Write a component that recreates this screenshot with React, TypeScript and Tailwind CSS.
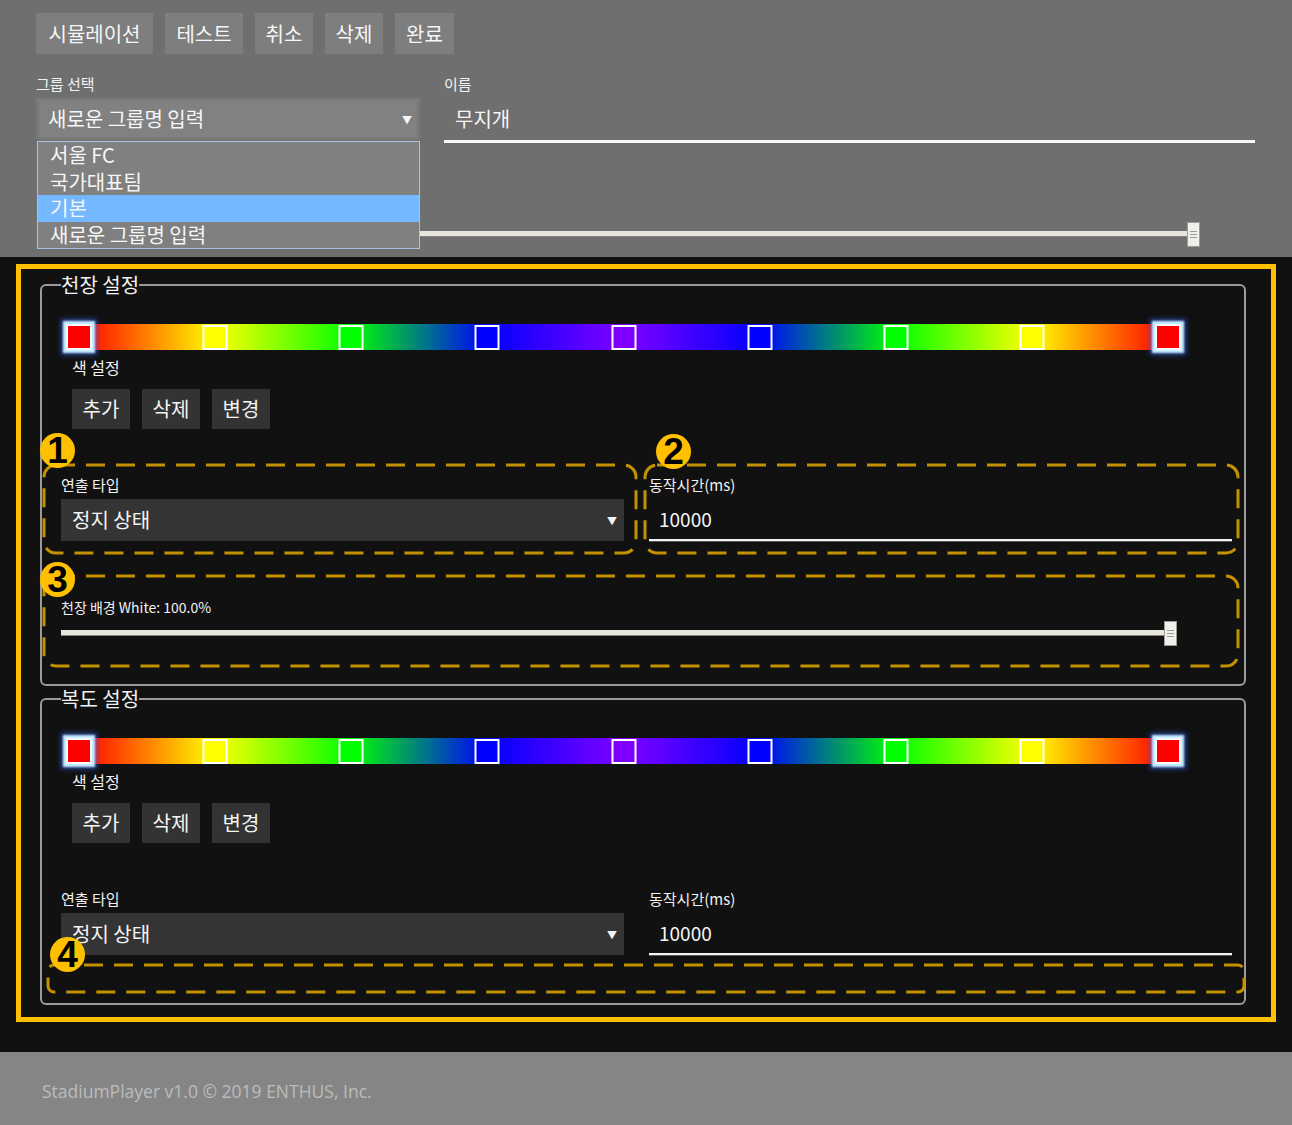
import React from "react";

const RAINBOW = ["#ff0000", "#ffff00", "#00ff00", "#0000ff", "#8000ff", "#0000ff", "#00ff00", "#ffff00", "#ff0000"];

function ColorBar() {
  const pad = 13;
  const span = 1089;
  const stops = RAINBOW.map((c, i) => ({ c, x: pad + (span * i) / (RAINBOW.length - 1) }));
  const background = `linear-gradient(to right, ${stops.map((s) => `${s.c} ${s.x}px`).join(", ")})`;
  return (
    <div className="relative ml-[5px] h-[26px] w-[1115px]" style={{ background }}>
      {stops.map((s, i) => {
        const selected = i === 0 || i === stops.length - 1;
        return (
          <div
            key={i}
            className={
              selected
                ? "absolute top-0 h-[26px] w-[26px] -translate-x-1/2 border-2 border-[#f6fcff] shadow-[0_0_2px_3px_#c8ecff,0_0_5px_5px_rgba(40,90,220,0.65)]"
                : "absolute top-[0.5px] h-[25px] w-[25px] -translate-x-1/2 border-2 border-white"
            }
            style={{ left: s.x, backgroundColor: s.c }}
          />
        );
      })}
    </div>
  );
}

function Slider({ className }: { className: string }) {
  return (
    <div className={`relative h-[25px] ${className}`}>
      <div className="absolute left-0 right-[6px] top-[9px] h-[6px] border-b border-[#85827c] bg-[#e8e5df]" />
      <div className="absolute right-0 top-0 flex h-[25px] w-[13px] flex-col items-center justify-center gap-[2px] border border-[#9d9a94] bg-[#f1efeb]">
        <span className="h-px w-[7px] bg-[#9a9a9a]" />
        <span className="h-px w-[7px] bg-[#9a9a9a]" />
        <span className="h-px w-[7px] bg-[#9a9a9a]" />
      </div>
    </div>
  );
}

function Dash({ className, r }: { className: string; r: number }) {
  return (
    <div className={`pointer-events-none absolute z-10 ${className}`}>
      <svg className="h-full w-full overflow-visible">
        <rect x="0" y="0" width="100%" height="100%" rx={r} fill="none" stroke="#c49200" strokeWidth="3" strokeDasharray="19 11" />
      </svg>
    </div>
  );
}

function Badge({ n, className }: { n: string; className: string }) {
  return (
    <div
      className={`absolute z-20 flex h-[35px] w-[35px] items-center justify-center rounded-full bg-[#ffc000] [font-family:'Liberation_Sans',sans-serif] text-[37px] font-bold leading-none text-black ${className}`}
    >
      {n}
    </div>
  );
}

function DarkButton({ label }: { label: string }) {
  return (
    <button className="flex h-[40px] w-[58px] items-center justify-center bg-[#333333] text-[20px] text-[#f4f4f4]">{label}</button>
  );
}

function ModeSelect() {
  return (
    <div className="mt-1 flex h-[42px] w-[563px] items-center justify-between bg-[#343434] pl-[11px] pr-[7px] text-[20px] text-[#f4f4f4]">
      <span>정지 상태</span>
      <span className="text-[10px]">▼</span>
    </div>
  );
}

function DurationInput() {
  return (
    <div className="mt-1 flex h-[42px] w-[583px] items-center border-b-2 border-[#f4f4f4] pl-[10px] text-[19px] text-[#f4f4f4] shadow-[0_1px_0_#555]">
      10000
    </div>
  );
}

function Section({
  title,
  children,
  extraClass,
}: {
  title: string;
  children: React.ReactNode;
  extraClass: string;
}) {
  return (
    <fieldset className={`w-[1206px] rounded-[6px] border-2 border-[#9b9b9b] pl-[19px] pr-[12px] pt-[27px] ${extraClass}`}>
      <legend className="text-[20px] leading-[24px] text-[#f2f2f2]">{title}</legend>
      <ColorBar />
      <div className="ml-[11px] mt-[7px] text-[16px] leading-[20px]">색 설정</div>
      <div className="ml-[11px] mt-3 flex gap-[12px]">
        <DarkButton label="추가" />
        <DarkButton label="삭제" />
        <DarkButton label="변경" />
      </div>
      {children}
    </fieldset>
  );
}

export default function App() {
  const topButtons: [string, string][] = [
    ["시뮬레이션", "w-[117px]"],
    ["테스트", "w-[78px]"],
    ["취소", "w-[58px]"],
    ["삭제", "w-[58px]"],
    ["완료", "w-[59px]"],
  ];
  return (
    <div className="min-h-[1125px] bg-[#111111] [font-family:'Noto_Sans_CJK_KR','Noto_Sans',sans-serif] text-[#f2f2f2]">
      {/* Top editor area */}
      <div className="h-[257px] bg-[#6f6f6f] pl-9 pt-[13px]">
        <div className="flex gap-3">
          {topButtons.map(([t, w]) => (
            <button key={t} className={`flex h-[41px] items-center justify-center bg-[#7e7e7e] text-[20px] text-[#f6f6f6] ${w}`}>
              {t}
            </button>
          ))}
        </div>
        <div className="mt-5 flex gap-6">
          <div className="relative w-[384px]">
            <div className="text-[15px] leading-5">그룹 선택</div>
            <div className="mt-1 flex h-[42px] items-center justify-between border-[3px] border-[#797979] bg-[#818181] pl-[9px] pr-[5px] text-[20px] text-[#f6f6f6]">
              <span>새로운 그룹명 입력</span>
              <span className="text-[10px]">▼</span>
            </div>
            <div className="absolute left-px top-[67px] z-30 w-[383px] border border-[#a9c3e2] bg-[#808080] text-[20px] text-[#f6f6f6]">
              <div className="h-[26.5px] pl-3 leading-[26.5px]">서울 FC</div>
              <div className="h-[26.5px] pl-3 leading-[26.5px]">국가대표팀</div>
              <div className="h-[26.5px] bg-[#74b8ff] pl-3 leading-[26.5px]">기본</div>
              <div className="h-[26.5px] pl-3 leading-[26.5px]">새로운 그룹명 입력</div>
            </div>
          </div>
          <div className="w-[811px]">
            <div className="text-[15px] leading-5">이름</div>
            <div className="mt-1 flex h-[45px] items-center border-b-[3px] border-[#f6f6f6] pl-[11px] text-[20px] text-[#f6f6f6]">무지개</div>
          </div>
        </div>
        <Slider className="ml-[4px] mt-[79px] w-[1160px]" />
      </div>

      {/* Dark settings area */}
      <div className="px-4 pb-[30px] pt-[7px]">
        <div className="w-[1260px] border-[5px] border-[#ffc000] pb-[12px] pl-[19px] pt-[4px]">
          <Section title="천장 설정" extraClass="pb-[38px]">
            <div className="mt-[46px] flex gap-[25px]">
              <div className="relative">
                <Dash className="-bottom-[12px] -left-[17px] -right-[12px] -top-[10px]" r={12} />
                <Badge n="1" className="-left-[21px] -top-[42px]" />
                <div className="text-[15px] leading-5">연출 타입</div>
                <ModeSelect />
              </div>
              <div className="relative">
                <Dash className="-bottom-[12px] -left-[4px] -right-[6px] -top-[10px]" r={12} />
                <Badge n="2" className="left-[7px] -top-[41px]" />
                <div className="text-[15px] leading-5">동작시간(ms)</div>
                <DurationInput />
              </div>
            </div>
            <div className="relative mt-[56px]">
              <Dash className="-bottom-[20px] -left-[17px] -right-[6px] -top-[21px]" r={12} />
              <Badge n="3" className="-left-[21px] -top-[35px]" />
              <div className="text-[14px] leading-5">천장 배경 White: 100.0%</div>
              <Slider className="mt-1 w-[1116px]" />
            </div>
          </Section>

          <Section title="복도 설정" extraClass="mt-px pb-[11px]">
            <div className="mt-[46px] flex gap-[25px]">
              <div>
                <div className="text-[15px] leading-5">연출 타입</div>
                <ModeSelect />
              </div>
              <div>
                <div className="text-[15px] leading-5">동작시간(ms)</div>
                <DurationInput />
              </div>
            </div>
            <div className="relative -ml-[13px] -mr-[12px] mt-[10px] h-[27px]">
              <Dash className="inset-0" r={6} />
              <Badge n="4" className="left-[2px] -top-[28px]" />
            </div>
          </Section>
        </div>
      </div>

      {/* Footer */}
      <div className="h-[73px] bg-[#858585] pl-[42px] pt-[27px] [font-family:'Open_Sans','Noto_Sans',sans-serif] text-[17.5px] leading-6 text-[#bcbcbc]">
        StadiumPlayer v1.0 © 2019 ENTHUS, Inc.
      </div>
    </div>
  );
}
